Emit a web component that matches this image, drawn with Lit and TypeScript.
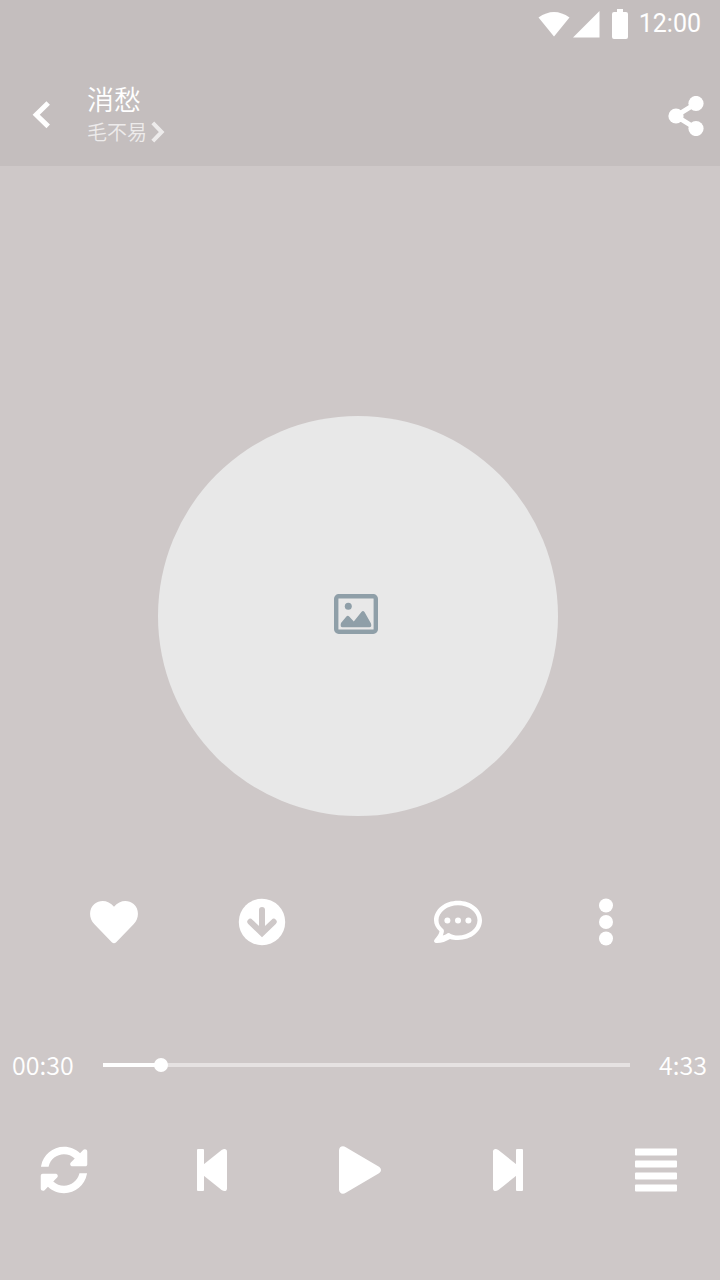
import { LitElement, html, css, svg } from "lit";
import { customElement, state } from "lit/decorators.js";

const SYNC =
  "M370.7 133.3C339.5 104 298.9 88 255.8 88C178.4 88 111.5 141.2 93 214.8L91.5 222H10L12.3 209.8C33.9 94.9 134.8 8 256 8c66.4 0 126.8 26.1 171.3 68.7L463 41C478.1 25.9 504 36.6 504 58V196c0 11-9 20-20 20H346c-21.4 0-32.1-25.9-17-41l41.7-41.7z";

const COMMENT =
  "M24 2.7C37.3 2.7 48 11.3 48 22.3C48 33.4 37.3 42 24 42C20.7 42 18 41.6 16 41C12 43.5 6.5 45.3 2 45C0 44.8-.6 42.8.8 41.2C3 38.8 5.3 35.5 5.5 33.2C2 30 0 26.3 0 22.3C0 11.3 10.7 2.7 24 2.7Z" +
  "M24 7.2C13.3 7.2 4.5 14 4.5 22.3C4.5 26 6.3 29 9.3 31.2C10.4 32.2 9.9 34.8 8.8 37.6C11 37 13.4 34.8 15 34.9C18 36.8 21 37.5 24 37.5C34.8 37.5 43.5 30.7 43.5 22.3C43.5 14 34.8 7.2 24 7.2Z";

const icons = {
  heart: svg`<path d="M21.8 44.2L4.2 26C-1.5 19.8-1.2 10.6 4.4 6C10 1.4 18.6 2.1 24 8.7C29.4 2.1 38 1.4 43.6 6C49.2 10.6 49.5 19.8 43.8 26L26.2 44.2Q24 46.2 21.8 44.2Z"/>`,
  download: svg`<circle cx="24" cy="24" r="23.2"/><g class="cut"><path d="M24 12V34"/><path d="M12.3 23.8L24 35L35.7 23.8"/></g>`,
  comment: svg`<path fill-rule="evenodd" d=${COMMENT}/><circle cx="13.4" cy="22.4" r="3"/><circle cx="24" cy="22.4" r="3"/><circle cx="34.4" cy="22.4" r="3"/>`,
  more: svg`<circle cx="24" cy="7.5" r="7"/><circle cx="24" cy="24" r="7"/><circle cx="24" cy="40.5" r="7"/>`,
  repeat: svg`<g transform="scale(.09375)"><path d=${SYNC}/><path transform="rotate(180 256 256)" d=${SYNC}/></g>`,
  previous: svg`<rect x="9" y="3" width="7" height="42" rx="1"/><path d="M15.5 18.6L33.6 4C36.5 2 39 3 39 5.6V42.4C39 45 36.5 46 33.6 44L15.5 29.4Z"/>`,
  next: svg`<rect x="32" y="3" width="7" height="42" rx="1"/><path d="M32.5 18.6L14.4 4C11.5 2 9 3 9 5.6V42.4C9 45 11.5 46 14.4 44L32.5 29.4Z"/>`,
  play: svg`<path d="M3 4.5C3 .8 6.5-.8 9.8 1.2L43 20.8C45.6 22.4 45.6 25.6 43 27.2L9.8 46.8C6.5 48.8 3 47.2 3 43.5Z"/>`,
  pause: svg`<rect x="8" y="3" width="11" height="42" rx="2"/><rect x="29" y="3" width="11" height="42" rx="2"/>`,
  list: svg`<rect x="3" y="2.6" width="42" height="7" rx="1"/><rect x="3" y="14.6" width="42" height="7" rx="1"/><rect x="3" y="26.6" width="42" height="7" rx="1"/><rect x="3" y="38.6" width="42" height="7" rx="1"/>`,
};

type IconName = keyof typeof icons;

@customElement("app-root")
export class AppRoot extends LitElement {
  @state() private position = 30;
  @state() private playing = false;
  private readonly duration = 273;

  static styles = css`
    :host {
      --page: #cec8c8;
      --bar: #c4bebe;
      display: flex;
      flex-direction: column;
      min-height: 100vh;
      background: var(--page);
      color: #fff;
      font-family: "Noto Sans CJK SC", sans-serif;
      font-weight: 350;
    }
    * { box-sizing: border-box; }
    svg { display: block; fill: currentColor; flex: none; }
    button, a { color: inherit; text-decoration: none; }
    button { display: block; padding: 0; border: 0; background: none; font: inherit; cursor: pointer; }
    header { background: var(--bar); padding-bottom: 18px; }
    .status {
      display: flex;
      align-items: center;
      justify-content: flex-end;
      height: 48px;
      padding-right: 19px;
    }
    .clock {
      margin-left: 10px;
      font: 400 25px/30px Roboto, sans-serif;
    }
    .nav { display: flex; align-items: center; padding: 34px 16px 0 32px; }
    .nav button { padding-top: 2px; }
    .titles { flex: 1; padding-left: 36px; }
    h1 { margin: 0; font-size: 27px; line-height: 34px; font-weight: 350; }
    .artist {
      display: flex;
      width: fit-content;
      align-items: center;
      gap: 4px;
      font-size: 20px;
      line-height: 32px;
      opacity: 0.7;
    }
    .line { fill: none; stroke: currentColor; }
    main { flex: 1; display: flex; flex-direction: column; }
    .stage {
      flex: 1;
      display: flex;
      align-items: flex-end;
      justify-content: center;
      padding: 40px 4px 82px 0;
    }
    .cover {
      display: flex;
      align-items: center;
      justify-content: center;
      width: 400px;
      height: 400px;
      padding: 0 4px 4px 0;
      border-radius: 50%;
      background: #e8e8e8;
      color: #8f9fa8;
    }
    .actions { display: flex; justify-content: space-between; padding: 0 90px; }
    .pair { display: flex; gap: 100px; }
    .cut {
      fill: none;
      stroke: var(--page);
      stroke-width: 6;
      stroke-linecap: round;
    }
    .progress {
      display: flex;
      align-items: center;
      gap: 22px;
      margin-top: 98px;
      padding: 0 13px 0 12px;
      font-size: 25px;
      line-height: 40px;
    }
    .time { flex: none; padding-bottom: 2px; }
    .seek {
      appearance: none;
      flex: 1;
      min-width: 0;
      height: 14px;
      margin: 0;
      background: none;
      cursor: pointer;
    }
    .seek::-webkit-slider-runnable-track {
      height: 14px;
      background:
        linear-gradient(#fff, #fff) 7px 5px / calc((100% - 14px) * var(--ratio)) 4px no-repeat,
        linear-gradient(#e6e2e2, #e6e2e2) 7px 5px / calc(100% - 14px) 4px no-repeat;
    }
    .seek::-webkit-slider-thumb {
      appearance: none;
      width: 14px;
      height: 14px;
      border-radius: 50%;
      background: #fff;
    }
    .controls {
      display: flex;
      justify-content: space-between;
      padding: 60px 40px 86px;
    }
  `;

  private button(name: IconName, label: string, action?: () => void) {
    return html`<button type="button" aria-label=${label} @click=${action}>
      <svg width="48" height="48" viewBox="0 0 48 48">${icons[name]}</svg>
    </button>`;
  }

  private format(seconds: number, pad = 1) {
    const minutes = String(Math.floor(seconds / 60)).padStart(pad, "0");
    return `${minutes}:${String(seconds % 60).padStart(2, "0")}`;
  }

  render() {
    return html`
      <header>
        <div class="status">
          <svg width="91" height="48" viewBox="538 0 91 48">
            <path d="M538.5 17.5Q554 6.5 569.5 17.5L554 36.5Z" />
            <path d="M573 37.5L599.5 11V37.5Z" />
            <path d="M617 9h6v3h3q2 0 2 2v23q0 2-2 2h-12q-2 0-2-2V14q0-2 2-2h3z" />
          </svg>
          <span class="clock">12:00</span>
        </div>
        <div class="nav">
          <button type="button" aria-label="返回">
            <svg width="19" height="30" viewBox="0 0 19 30">
              <path class="line" stroke-width="5" d="M16.2 2L4.2 13.7L16.2 25.4" />
            </svg>
          </button>
          <div class="titles">
            <h1>消愁</h1>
            <a class="artist" href="#artist">
              毛不易
              <svg width="14" height="22" viewBox="0 0 14 22">
                <path class="line" stroke-width="4" d="M1.8 1.8L10.7 11L1.8 20.2" />
              </svg>
            </a>
          </div>
          <button type="button" aria-label="分享">
            <svg width="36" height="40" viewBox="0 0 36 40">
              <path class="line" stroke-width="5" d="M28 7.5L8 20L28 32.5" />
              <circle cx="28" cy="7.5" r="7.6" />
              <circle cx="8" cy="20" r="7.6" />
              <circle cx="28" cy="32.5" r="7.6" />
            </svg>
          </button>
        </div>
      </header>
      <main>
        <div class="stage">
          <div class="cover">
            <svg width="44" height="40" viewBox="0 0 44 40">
              <rect class="line" x="2.2" y="2.2" width="39.6" height="35.6" rx="2.5" stroke-width="4.4" />
              <circle cx="14.3" cy="12.3" r="3.5" />
              <path d="M7 29L12.4 22.6Q13.7 21 15.2 22.6L19.8 27.4L27.4 18Q29 16.2 30.5 18L37 29.4Q38 33.2 35.5 33.2H8.5Q5.8 33.2 7 29Z" />
            </svg>
          </div>
        </div>
        <div class="actions">
          <div class="pair">${this.button("heart", "喜欢")}${this.button("download", "下载")}</div>
          <div class="pair">${this.button("comment", "评论")}${this.button("more", "更多")}</div>
        </div>
        <div class="progress">
          <span class="time">${this.format(this.position, 2)}</span>
          <input
            class="seek"
            type="range"
            aria-label="播放进度"
            min="0"
            max=${this.duration}
            .value=${String(this.position)}
            style="--ratio: ${this.position / this.duration}"
            @input=${(e: Event) => (this.position = Number((e.target as HTMLInputElement).value))}
          />
          <span class="time">${this.format(this.duration)}</span>
        </div>
        <div class="controls">
          ${this.button("repeat", "循环播放")}
          ${this.button("previous", "上一首")}
          ${this.button(this.playing ? "pause" : "play", "播放", () => (this.playing = !this.playing))}
          ${this.button("next", "下一首")}
          ${this.button("list", "播放列表")}
        </div>
      </main>
    `;
  }
}
